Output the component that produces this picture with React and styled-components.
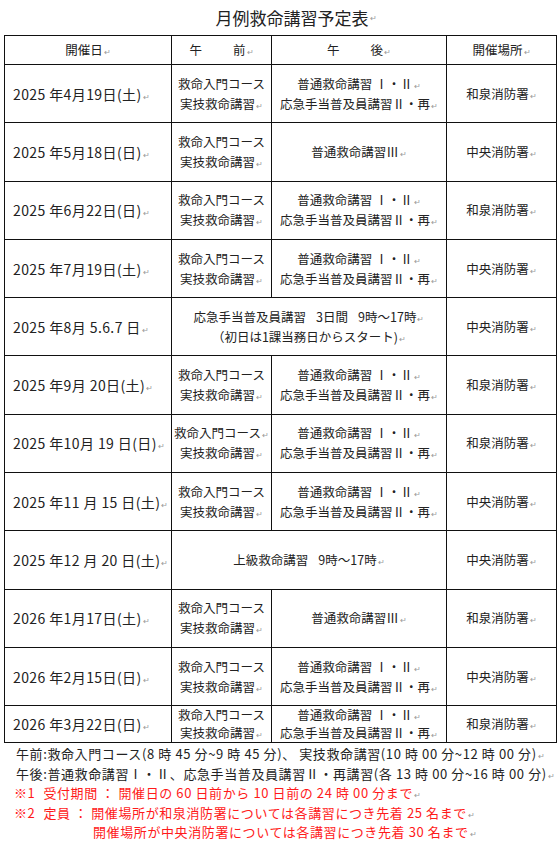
import React from 'react';
import styled, { createGlobalStyle } from 'styled-components';

const GlobalStyle = createGlobalStyle`
  body {
    margin: 0;
    background: #fff;
    font-family: "Noto Sans CJK JP", "Noto Sans", sans-serif;
    color: #222;
  }
`;

const Page = styled.div`
  width: 560px;
  height: 849px;
  overflow: hidden;
`;

const Title = styled.h1`
  margin: 0;
  height: 35px;
  display: flex;
  align-items: center;
  justify-content: center;
  font-size: 17px;
  font-weight: 400;
  padding-left: 32px;
  line-height: 1;
`;

const Table = styled.table`
  margin-left: 4px;
  width: 552px;
  border-collapse: collapse;
  table-layout: fixed;
`;

const Row = styled.tr`
  height: ${p => p.h}px;
`;

const Cell = styled.td`
  border: 1.5px solid #111;
  padding: 0;
  font-size: 12.5px;
  line-height: ${p => p.lh || 20}px;
  text-align: ${p => p.align || 'center'};
  vertical-align: middle;
  white-space: nowrap;
  overflow: hidden;
`;

const DateCell = styled(Cell)`
  text-align: left;
  padding-left: 8px;
  font-size: 14px;
  letter-spacing: 0.4px;
`;

const Mark = styled.span`
  color: #999;
  font-size: 8px;
  line-height: 1;
  margin-left: 1px;
  letter-spacing: 0;
`;

const Gap = styled.span`
  display: inline-block;
  width: ${p => p.w}px;
  height: 1px;
`;

const Notes = styled.div`
  padding-top: 1px;
  font-size: 13px;
  line-height: 19.5px;
  letter-spacing: 0.6px;
`;

const Note = styled.div`
  height: 19.5px;
  padding-left: ${p => p.indent}px;
  color: ${p => (p.red ? '#ff1a1a' : '#222')};
  white-space: nowrap;
`;

const M = () => <Mark>↵</Mark>;

const AM = ({ mark }) => (
  <>
    救命入門コース{mark && <M />}
    <br />
    実技救命講習<M />
  </>
);

const PM12 = () => (
  <>
    普通救命講習 Ⅰ・Ⅱ<M />
    <br />
    応急手当普及員講習Ⅱ・再<M />
  </>
);

const PM3 = () => (
  <>
    普通救命講習Ⅲ<M />
  </>
);

const rows = [
  { date: '2025 年4月19日(土)', pm: 'a', place: '和泉消防署' },
  { date: '2025 年5月18日(日)', pm: 'b', place: '中央消防署' },
  { date: '2025 年6月22日(日)', pm: 'a', place: '和泉消防署' },
  { date: '2025 年7月19日(土)', pm: 'a', place: '中央消防署' },
  { date: '2025 年8月 5.6.7 日', span: 'aug', place: '中央消防署' },
  { date: '2025 年9月 20日(土)', pm: 'a', place: '和泉消防署' },
  { date: '2025 年10月 19 日(日)', pm: 'a', place: '和泉消防署', mark: true },
  { date: '2025 年11 月 15 日(土)', pm: 'a', place: '中央消防署' },
  { date: '2025 年12 月 20 日(土)', span: 'dec', place: '中央消防署' },
  { date: '2026 年1月17日(土)', pm: 'b', place: '和泉消防署' },
  { date: '2026 年2月15日(日)', pm: 'a', place: '中央消防署' },
  { date: '2026 年3月22日(日)', pm: 'a', place: '和泉消防署', last: true },
];

export default function App() {
  return (
    <Page>
      <GlobalStyle />
      <Title>
        月例救命講習予定表<M />
      </Title>
      <Table>
        <colgroup>
          <col style={{ width: 167 }} />
          <col style={{ width: 100 }} />
          <col style={{ width: 175 }} />
          <col style={{ width: 110 }} />
        </colgroup>
        <tbody>
          <Row h={29}>
            <Cell>開催日<M /></Cell>
            <Cell>午<Gap w={31} />前<M /></Cell>
            <Cell>午<Gap w={31} />後<M /></Cell>
            <Cell>開催場所<M /></Cell>
          </Row>
          {rows.map(r => (
            <Row key={r.date} h={r.last ? 37 : 58.3}>
              <DateCell>{r.date}<M /></DateCell>
              {r.span === 'aug' && (
                <Cell colSpan={2}>
                  応急手当普及員講習<Gap w={10} />3日間<Gap w={10} />9時～17時<M />
                  <br />
                  （初日は1課当務日からスタート)<M />
                </Cell>
              )}
              {r.span === 'dec' && (
                <Cell colSpan={2}>
                  上級救命講習<Gap w={10} />9時～17時<M />
                </Cell>
              )}
              {!r.span && (
                <>
                  <Cell lh={r.last ? 18 : 20}><AM mark={r.mark} /></Cell>
                  <Cell lh={r.last ? 18 : 20}>{r.pm === 'a' ? <PM12 /> : <PM3 />}</Cell>
                </>
              )}
              <Cell>{r.place}<M /></Cell>
            </Row>
          ))}
        </tbody>
      </Table>
      <Notes>
        <Note indent={16}>
          午前:救命入門コース(8 時 45 分~9 時 45 分)、 実技救命講習(10 時 00 分~12 時 00 分)<M />
        </Note>
        <Note indent={16}>
          午後:普通救命講習Ⅰ・Ⅱ、応急手当普及員講習Ⅱ・再講習(各 13 時 00 分~16 時 00 分)<M />
        </Note>
        <Note indent={14} red>
          ※1<Gap w={8} />受付期間 ： 開催日の 60 日前から 10 日前の 24 時 00 分まで<M />
        </Note>
        <Note indent={14} red>
          ※2<Gap w={8} />定員 ： 開催場所が和泉消防署については各講習につき先着 25 名まで<M />
        </Note>
        <Note indent={93} red>
          開催場所が中央消防署については各講習につき先着 30 名まで<M />
        </Note>
      </Notes>
    </Page>
  );
}
